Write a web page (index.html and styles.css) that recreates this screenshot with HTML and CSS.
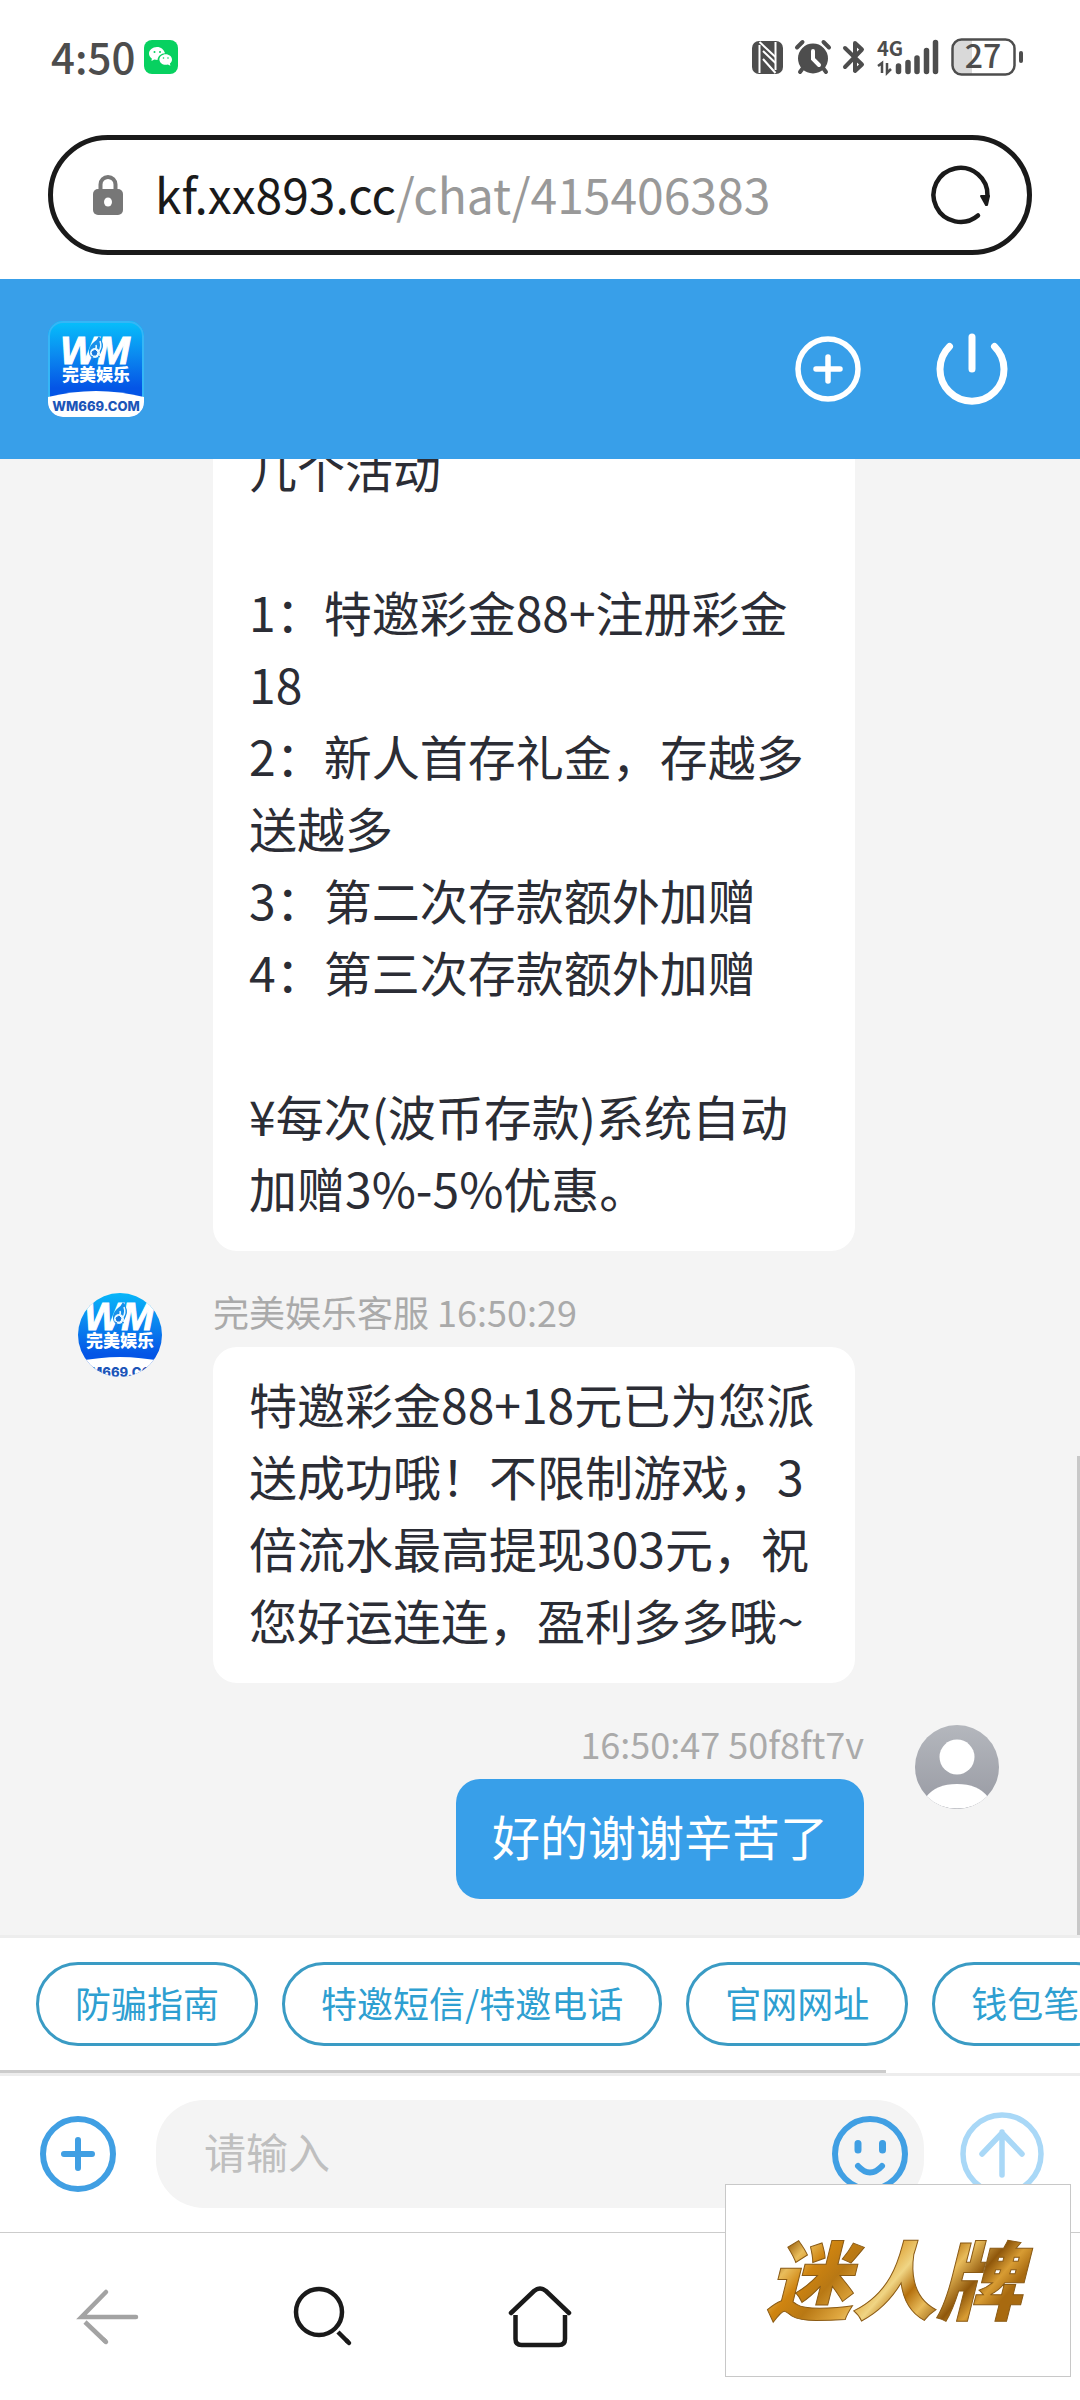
FILE: index.html
```html
<!DOCTYPE html>
<html lang="zh-CN">
<head>
    <meta charset="UTF-8">
    <meta name="viewport" content="width=device-width, initial-scale=1.0">
    <title>完美娱乐客服</title>
    <link rel="stylesheet" href="styles.css">
</head>
<body>
    <!-- shared brand logo -->
    <svg class="defs" width="0" height="0" aria-hidden="true">
        <defs>
            <linearGradient id="logoBlue" x1="0" y1="0" x2="0" y2="1">
                <stop offset="0" stop-color="#06c0fb"/>
                <stop offset="0.35" stop-color="#0b8af0"/>
                <stop offset="0.7" stop-color="#0455e6"/>
            </linearGradient>
            <clipPath id="logoClip"><rect width="96" height="96" rx="15"/></clipPath>
            <symbol id="logo" viewBox="0 0 96 96">
                <g clip-path="url(#logoClip)">
                    <rect width="96" height="96" fill="url(#logoBlue)"/>
                    <rect x="1" y="1" width="94" height="94" rx="14" fill="none" stroke="#35b6f6" stroke-width="2"/>
                    <path d="M0 76Q48 64 96 76V96H0Z" fill="#fff"/>
                    <text class="logo-wm" x="47" y="43" text-anchor="middle">WM</text>
                    <path d="M51 15q6 8 3 14-2 7-9 9-5-4-4-9 1-5 5-8 3-2 5-6z" fill="#1690ea"/>
                    <path d="M52 20q2 6-1 10M48 24q1 3-1 4" fill="none" stroke="#e8f8ff" stroke-width="1.500"/>
                    <circle cx="47" cy="32" r="5" fill="#e8f8ff"/>
                    <path d="M47 29l2 2-1 3h-3l-1-3zM43 35l2 1M50 35l2 1M47 37l-2 5" fill="#1676dc" stroke="#1676dc"/>
                    <text class="logo-name" x="48" y="60" text-anchor="middle">完美娱乐</text>
                    <text class="logo-url" x="48" y="90" text-anchor="middle">WM669.COM</text>
                </g>
            </symbol>
        </defs>
    </svg>

    <div class="status">
        <span class="clock">4:50</span>
        <svg width="34" height="34" viewBox="0 0 34 34">
            <rect width="34" height="34" rx="8" fill="#07d160"/>
            <path d="M13 7c-4.500 0-8 3-8 6.500 0 2 1 3.700 2.800 5L7.500 21l2.800-1.500c1 .3 2 .4 3.200.4C14 16 17 13.500 21 13.300 20 9.500 17 7 13 7z" fill="#fff"/>
            <path d="M28 19.500c0-3-2.800-5.300-6.300-5.300s-6.300 2.300-6.300 5.300 2.800 5.300 6.300 5.300c.8 0 1.500-.1 2.200-.3l2.500 1.300-.5-2.200c1.300-1 2.100-2.500 2.100-4.100z" fill="#fff"/>
            <g fill="#07d160"><circle cx="10.500" cy="12" r="1"/><circle cx="16" cy="12" r="1"/><circle cx="19.500" cy="18" r=".8"/><circle cx="24" cy="18" r=".8"/></g>
        </svg>
        <span class="status-icons">
            <svg width="31" height="33" viewBox="0 0 31 33">
                <rect width="31" height="33" rx="7" fill="#4d4d4d"/>
                <path d="M7.500 32V4M23.500 29V1" stroke="#fff" stroke-width="2" fill="none"/>
                <path d="M7.500 1L23.500 16M11 10L23.500 22M11 18L23.500 32" fill="none" stroke="#fff" stroke-width="2"/>
            </svg>
            <svg width="36" height="34" viewBox="0 0 36 34">
                <circle cx="18" cy="18.500" r="15" fill="#4d4d4d"/>
                <path d="M2 7.500L7.500 2M34 7.500L28.500 2M8 28L5 32M28 28L31 32" stroke="#4d4d4d" stroke-width="4" stroke-linecap="round"/>
                <path d="M18 11V19L24 25" fill="none" stroke="#fff" stroke-width="4" stroke-linecap="round"/>
            </svg>
            <svg width="22" height="34" viewBox="0 0 22 34">
                <path d="M2 8L19 24.500 12 31V3L19 9.500 2 27" fill="none" stroke="#4d4d4d" stroke-width="4" stroke-linecap="round" stroke-linejoin="round"/>
            </svg>
            <svg width="62" height="36" viewBox="0 0 62 36">
                <text class="net" x="0" y="17">4G</text>
                <path d="M1 27L5 24V34M10 24V34L14 30" fill="none" stroke="#4d4d4d" stroke-width="2.500"/>
                <path d="M21.500 27V32.500M31 23.500V32.500M40 19V32.500M49.500 11.500V32.500M58.500 3.500V32.500" stroke="#4d4d4d" stroke-width="5.500" stroke-linecap="round"/>
            </svg>
            <svg width="73" height="38" viewBox="0 0 73 38">
                <path d="M10 2H21V36H10Q2 36 2 28V10Q2 2 10 2Z" fill="#d9d9d9"/>
                <rect x="1.500" y="1.500" width="62" height="35" rx="9" fill="none" stroke="#4d4d4d" stroke-width="2.500"/>
                <path d="M70 15V23" stroke="#4d4d4d" stroke-width="4" stroke-linecap="round"/>
                <text class="battery" x="32" y="30" text-anchor="middle">27</text>
            </svg>
        </span>
    </div>

    <div class="browser-bar">
        <div class="address">
            <svg width="30" height="40" viewBox="0 0 30 40">
                <path d="M7.500 17V9.500a7.500 7.500 0 0 1 15 0V17" fill="none" stroke="#777" stroke-width="4"/>
                <rect y="14" width="30" height="26" rx="5" fill="#777"/>
                <ellipse cx="15" cy="27" rx="4" ry="4.500" fill="#fff"/>
            </svg>
            <span class="url">kf.xx893.cc<span class="path">/chat/415406383</span></span>
            <button class="icon-btn" aria-label="刷新">
                <svg width="60" height="60" viewBox="0 0 60 60">
                    <path d="M47 50.500A27 27 0 1 1 56.500 31" fill="none" stroke="#1a1a1a" stroke-width="4.500" stroke-linecap="round"/>
                    <path d="M50 31H58L56 40H55Z" fill="#1a1a1a" stroke="#1a1a1a" stroke-width="2" stroke-linejoin="round"/>
                </svg>
            </button>
        </div>
    </div>

    <header class="header">
        <svg class="brand" width="96" height="96" role="img" aria-label="完美娱乐"><use href="#logo"/></svg>
        <button class="icon-btn" aria-label="新增">
            <svg width="68" height="68" viewBox="0 0 68 68" fill="none" stroke="#fff" stroke-width="5.500" stroke-linecap="round">
                <circle cx="34" cy="34" r="30"/>
                <path d="M34 22V46M22 34H46"/>
            </svg>
        </button>
        <button class="icon-btn" aria-label="退出">
            <svg width="72" height="72" viewBox="0 0 72 72" fill="none" stroke="#fff" stroke-width="7" stroke-linecap="round">
                <path d="M36 4V36M13.500 13.500a32 32 0 1 0 45 0"/>
            </svg>
        </button>
    </header>

    <main class="chat">
        <div class="message">
            <div class="avatar-space"></div>
            <div class="content">
                <div class="bubble">几个活动

1：特邀彩金88+注册彩金18
2：新人首存礼金，存越多送越多
3：第二次存款额外加赠
4：第三次存款额外加赠

¥每次(波币存款)系统自动加赠3%-5%优惠。</div>
            </div>
        </div>

        <div class="message">
            <div class="avatar"><svg width="96" height="96"><use href="#logo"/></svg></div>
            <div class="content">
                <div class="meta">完美娱乐客服 16:50:29</div>
                <div class="bubble">特邀彩金88+18元已为您派送成功哦！不限制游戏，3倍流水最高提现303元，祝您好运连连，盈利多多哦~</div>
            </div>
        </div>

        <div class="message mine">
            <div class="avatar">
                <svg width="84" height="84" viewBox="0 0 84 84">
                    <defs>
                        <linearGradient id="userGrey" x1="0" y1="0" x2="0" y2="1">
                            <stop offset="0" stop-color="#b4b7bd"/>
                            <stop offset="1" stop-color="#989aa3"/>
                        </linearGradient>
                    </defs>
                    <rect width="84" height="84" fill="url(#userGrey)"/>
                    <circle cx="42" cy="32" r="17.500" fill="#fff"/>
                    <path d="M11 72Q21 59 42 59T73 72Q60 83.500 42 83.500T11 72Z" fill="#fff"/>
                </svg>
            </div>
            <div class="content">
                <div class="meta">16:50:47 50f8ft7v</div>
                <div class="bubble">好的谢谢辛苦了</div>
            </div>
        </div>
        <div class="scroll-y"></div>
    </main>

    <div class="quick">
        <button class="chip">防骗指南</button>
        <button class="chip">特邀短信/特邀电话</button>
        <button class="chip">官网网址</button>
        <button class="chip">钱包笔</button>
        <div class="scroll-x"></div>
    </div>

    <form class="composer" onsubmit="return false">
        <button type="button" class="icon-btn" aria-label="更多">
            <svg width="78" height="78" viewBox="0 0 78 78" fill="none" stroke="#409fe3" stroke-width="6" stroke-linecap="round">
                <circle cx="39" cy="39" r="35"/>
                <path d="M39 25V53M25 39H53"/>
            </svg>
        </button>
        <div class="field">
            <input type="text" placeholder="请输入" aria-label="请输入">
            <button type="button" class="icon-btn" aria-label="表情">
                <svg width="78" height="78" viewBox="0 0 78 78" fill="none" stroke="#409fe3" stroke-width="6" stroke-linecap="round">
                    <circle cx="39" cy="39" r="35"/>
                    <path d="M27 28.500V35M51.500 28.500V35" stroke-width="7"/>
                    <path d="M27 51Q39 64 51 51"/>
                </svg>
            </button>
        </div>
        <button class="icon-btn" aria-label="发送">
            <svg width="84" height="84" viewBox="0 0 84 84" fill="none" stroke="#a9d8f7" stroke-width="5.500" stroke-linecap="round" stroke-linejoin="round">
                <circle cx="42" cy="42" r="39"/>
                <path d="M42 63V20M22 42L42 21 62 42"/>
            </svg>
        </button>
    </form>

    <nav class="toolbar">
        <button class="icon-btn" aria-label="后退">
            <svg width="64" height="64" viewBox="0 0 64 64" fill="none" stroke="#a3a3a3" stroke-width="4.500" stroke-linecap="round">
                <path d="M60 32H36 5.500L30 7"/>
                <path d="M9 37L30 57" stroke-linecap="butt"/>
                <path d="M28 55L30 57"/>
            </svg>
        </button>
        <button class="icon-btn" aria-label="搜索">
            <svg width="64" height="64" viewBox="0 0 64 64" fill="none" stroke="#1a1a1a" stroke-width="4.500">
                <circle cx="27" cy="27" r="23"/>
                <path d="M46 47L56 57"/>
                <path d="M55 56L57 58" stroke-linecap="round"/>
            </svg>
        </button>
        <button class="icon-btn" aria-label="主页">
            <svg width="64" height="64" viewBox="0 0 64 64" fill="none" stroke="#1a1a1a" stroke-width="4.500" stroke-linecap="round">
                <path d="M3 28L26 6Q32 1 38 6L61 28"/>
                <path d="M7.500 30V54Q7.500 60 13.500 60H51Q57 60 57 54V30" stroke-linecap="butt"/>
            </svg>
        </button>
    </nav>

    <div class="stamp">
        <svg width="290" height="120" viewBox="0 0 290 120">
            <defs>
                <linearGradient id="gold" x1="0" y1="0" x2="1" y2="0.400">
                    <stop offset="0" stop-color="#a96a10"/>
                    <stop offset="0.080" stop-color="#d9a23a"/>
                    <stop offset="0.150" stop-color="#9a5f0c"/>
                    <stop offset="0.220" stop-color="#e9bd5c"/>
                    <stop offset="0.300" stop-color="#cf8410"/>
                    <stop offset="0.400" stop-color="#b87814"/>
                    <stop offset="0.520" stop-color="#e0a840"/>
                    <stop offset="0.600" stop-color="#f0d584"/>
                    <stop offset="0.680" stop-color="#b5700d"/>
                    <stop offset="0.760" stop-color="#e8bb5a"/>
                    <stop offset="0.860" stop-color="#8f570b"/>
                    <stop offset="0.930" stop-color="#d89c33"/>
                    <stop offset="1" stop-color="#a86a10"/>
                </linearGradient>
            </defs>
            <text class="stamp-text" x="141" y="92" text-anchor="middle">迷人牌</text>
        </svg>
    </div>
</body>
</html>
```
FILE: styles.css
```css
* { box-sizing: border-box; }
body {
    margin: 0;
    height: 100vh;
    display: flex;
    flex-direction: column;
    position: relative;
    overflow: hidden;
    background: #fff;
    color: #2b2d35;
    font-family: "Noto Sans CJK SC", sans-serif;
}
svg { display: block; flex: none; overflow: visible; }
.defs { position: absolute; }
.icon-btn { padding: 0; border: none; background: none; cursor: pointer; }

/* logo */
.logo-wm { font: italic bold 39px "Liberation Sans", sans-serif; fill: #fff; stroke: #fff; stroke-width: 1px; }
.logo-name { font: 900 17px "Noto Sans CJK SC", sans-serif; fill: #fff; }
.logo-url { font: 800 13px Inter, sans-serif; fill: #1c55b8; }

/* phone status bar */
.status { display: flex; align-items: center; gap: 9px; height: 114px; padding: 0 56px 0 51px; flex: none; }
.clock { padding-bottom: 4px; font-size: 42px; font-weight: 500; color: #4d4d4d; }
.status-icons { display: flex; align-items: center; gap: 12px; margin-left: auto; }
.net { font: bold 20px "Noto Sans CJK SC", sans-serif; fill: #4d4d4d; }
.battery { font: 500 32px "Noto Sans CJK SC", sans-serif; fill: #4d4d4d; }

.browser-bar { padding: 21px 48px 24px; flex: none; }
.address { display: flex; align-items: center; height: 120px; padding: 0 36px 0 40px; border: 5px solid #1a1a1a; border-radius: 60px; }
.url { flex: 1; margin-left: 32px; padding-bottom: 4px; font-size: 48px; color: #1a1a1a; white-space: nowrap; }
.url .path { color: #999; }

/* chat header */
.header { display: flex; align-items: center; gap: 74px; height: 180px; padding: 0 72px 0 48px; background: #389fe9; flex: none; z-index: 1; }
.brand { margin-right: auto; }

/* messages */
.chat { flex: 1; min-height: 0; display: flex; flex-direction: column; justify-content: flex-end; gap: 42px; padding: 0 81px 36px 78px; background: #f4f4f4; position: relative; }
.message { display: flex; gap: 51px; }
.avatar, .avatar-space { width: 84px; flex: none; }
.avatar { height: 84px; border-radius: 50%; overflow: hidden; display: flex; align-items: center; justify-content: center; }
.content { flex: 1; padding-right: 144px; }
.meta { margin-bottom: 18px; font-size: 36px; line-height: 36px; color: #aaa; }
.bubble { padding: 20px 36px 28px; border-radius: 24px; background: #fff; font-size: 48px; line-height: 72px; white-space: pre-line; }
.mine { flex-direction: row-reverse; }
.mine .content { display: flex; flex-direction: column; align-items: flex-end; padding: 0; }
.mine .bubble { background: #389fe9; color: #fff; }
.scroll-y { position: absolute; right: 0; bottom: 0; width: 3px; height: 479px; background: #c8c8c8; }

/* quick replies */
.quick { display: flex; gap: 24px; padding: 24px 36px; border-top: 3px solid #ededed; border-bottom: 3px solid #ededed; overflow: hidden; position: relative; height: 141px; flex: none; }
.chip { height: 84px; padding: 0 36px 4px; border: 3px solid #3a9bc4; border-radius: 42px; background: #fff; color: #2e9fd1; font-family: inherit; font-size: 36px; white-space: nowrap; flex: none; }
.scroll-x { position: absolute; left: 0; bottom: 0; width: 82%; height: 3px; background: #ccc; }

/* input row */
.composer { display: flex; align-items: center; padding: 24px 36px 24px 39px; flex: none; }
.field { flex: 1; display: flex; align-items: center; height: 108px; margin: 0 36px 0 39px; padding: 0 15px 0 48px; border-radius: 48px; background: #f4f4f4; }
.field input { flex: 1; min-width: 0; padding: 0 0 8px; border: none; outline: none; background: none; font-family: inherit; font-size: 42px; color: #2b2d35; }
.field input::placeholder { color: #bfbfbf; }

.toolbar { display: grid; grid-template-columns: repeat(5, 1fr); align-items: center; justify-items: center; height: 168px; border-top: 1px solid #ccc; flex: none; }

/* floating brand stamp */
.stamp { position: absolute; right: 9px; bottom: 23px; width: 346px; height: 193px; display: flex; align-items: center; justify-content: center; border: 1px solid #c8c8c8; background: #fff; z-index: 2; }
.stamp-text { font: italic 900 85px "Noto Sans CJK SC", sans-serif; fill: url(#gold); stroke: #8a5a14; stroke-width: 1px; }
```
